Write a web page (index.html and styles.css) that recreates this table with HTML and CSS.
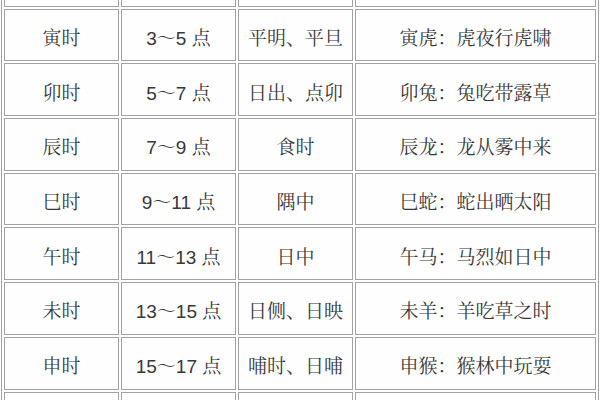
FILE: index.html
```html
<!DOCTYPE html>
<html lang="zh-CN">
<head>
<meta charset="utf-8">
<title>十二时辰</title>
<link rel="stylesheet" href="styles.css">
</head>
<body>
<table class="hours">
  <colgroup>
    <col class="c-name"><col class="c-range"><col class="c-alias"><col class="c-animal">
  </colgroup>
  <tbody>
    <tr class="edge"><td></td><td></td><td></td><td></td></tr>
    <tr><td>寅时</td><td>3～5 点</td><td>平明、平旦</td><td>寅虎：虎夜行虎啸</td></tr>
    <tr><td>卯时</td><td>5～7 点</td><td>日出、点卯</td><td>卯兔：兔吃带露草</td></tr>
    <tr><td>辰时</td><td>7～9 点</td><td>食时</td><td>辰龙：龙从雾中来</td></tr>
    <tr><td>巳时</td><td>9～11 点</td><td>隅中</td><td>巳蛇：蛇出晒太阳</td></tr>
    <tr><td>午时</td><td>11～13 点</td><td>日中</td><td>午马：马烈如日中</td></tr>
    <tr><td>未时</td><td>13～15 点</td><td>日侧、日映</td><td>未羊：羊吃草之时</td></tr>
    <tr><td>申时</td><td>15～17 点</td><td>哺时、日哺</td><td>申猴：猴林中玩耍</td></tr>
    <tr class="edge"><td></td><td></td><td></td><td></td></tr>
  </tbody>
</table>
</body>
</html>
```
FILE: styles.css
```css
html, body {
  margin: 0;
  padding: 0;
  background: #ffffff;
  overflow: hidden;
}

.hours {
  margin: -49px 0 0 1px;
  width: 598px;
  table-layout: fixed;
  border-collapse: separate;
  border-spacing: 2px;
  border: 1px solid #a4a4a4;
  font-family: "Liberation Sans", "Noto Serif CJK SC", "Noto Sans CJK SC", sans-serif;
  font-size: 19px;
  color: #383838;
}

.c-name, .c-range, .c-alias { width: 115px; }
.c-animal { width: 241px; }

.hours td {
  box-sizing: border-box;
  height: 52.7px;
  padding: 3px 0 0 0;
  border: 1px solid #a2a2a2;
  text-align: center;
  vertical-align: middle;
  white-space: nowrap;
  background: #fefefe;
}
```
